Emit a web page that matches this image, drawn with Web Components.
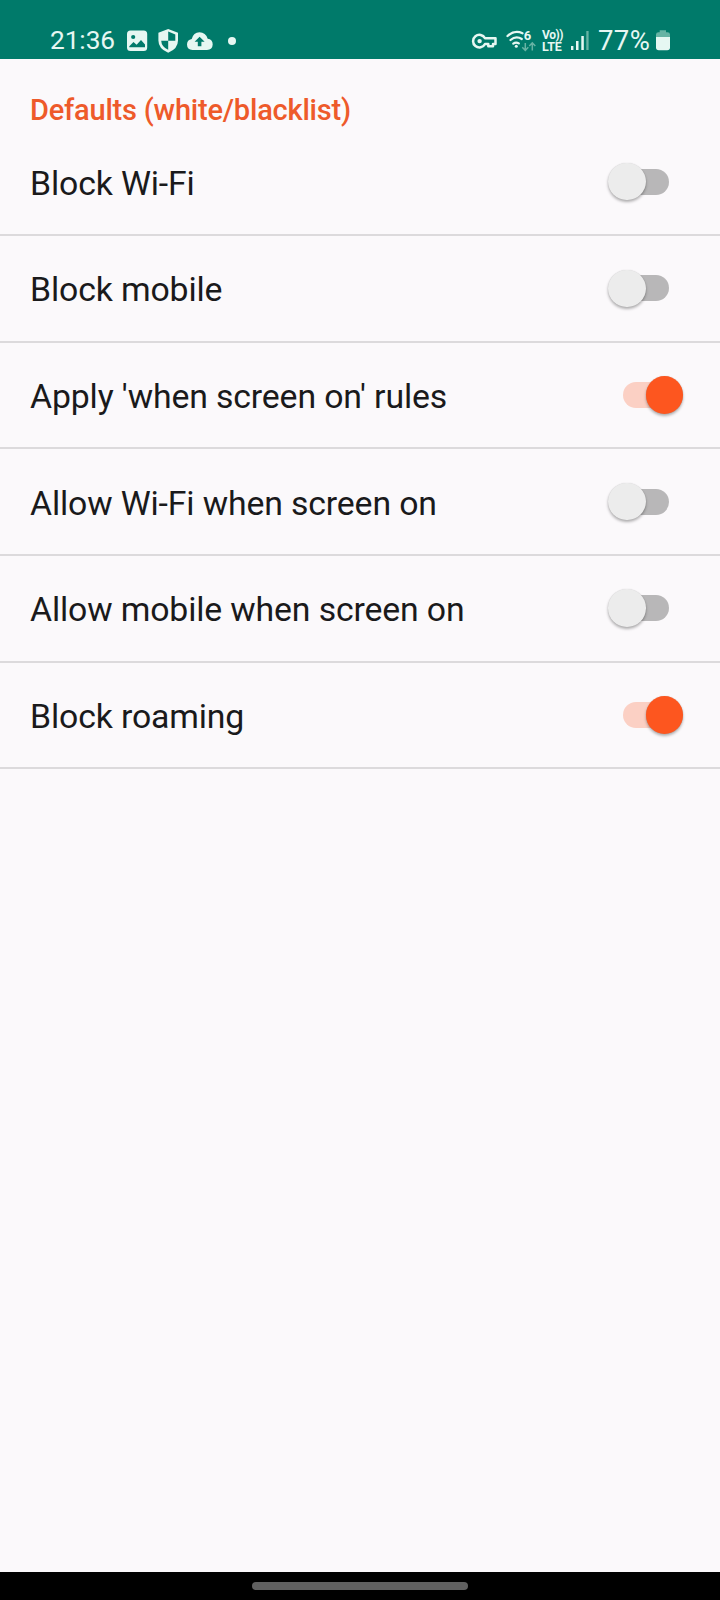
<!DOCTYPE html>
<html lang="en">
<head>
<meta charset="utf-8">
<title>Defaults</title>
<style>
html,body{margin:0;background:#fbf9fb}
body{font-family:Roboto,"Liberation Sans",sans-serif}
</style>
</head>
<body>
<settings-screen></settings-screen>
<script>
const define = (name, html, setup) => customElements.define(name, class extends HTMLElement {
  constructor() {
    super();
    const t = document.createElement('template');
    t.innerHTML = html;
    this.attachShadow({mode: 'open'}).appendChild(t.content.cloneNode(true));
    if (setup) setup(this);
  }
});

define('status-icon', `
<style>:host{display:block;flex:none;height:30px}::slotted(svg){display:block}</style><slot></slot>`);

define('volte-badge', `
<style>
:host{display:flex;flex-direction:column;width:22px;height:24px;flex:none;font-weight:700;color:#e6f7f2}
span{display:block;white-space:nowrap;line-height:11px;height:11px}
.v{font-size:12px;letter-spacing:-.4px}
.l{font-size:12.500px;letter-spacing:-.2px}
</style><span class="v">Vo))</span><span class="l">LTE</span>`);

define('status-bar', `
<style>
:host{display:flex;box-sizing:border-box;height:58.5px;background:#007a6a;color:#e6f7f2;padding:26px 49px 0 50px;justify-content:space-between}
.g{display:flex;height:30px}
.time,.pct{line-height:29px;white-space:nowrap}
.time{width:75px;font-size:26.300px;letter-spacing:-.1px}
.pct{width:57px;font-size:27.500px;letter-spacing:.4px}
volte-badge{margin:4px 6px 0 1px}
</style>
<div class="g">
 <span class="time">21:36</span>
 <status-icon><svg width="115" height="30" viewBox="125 26 115 30">
  <path fill="#e6f7f2" fill-rule="evenodd" d="M130.500 30.500H143.700Q147.200 30.500 147.200 34V47.500Q147.200 51 143.700 51H130.500Q127 51 127 47.500V34Q127 30.500 130.500 30.500ZM135.300 37A2.100 2.100 0 1 0 131.100 37A2.100 2.100 0 1 0 135.300 37ZM129.300 47.300H145V44.600L141 40L136.600 44.700L133.500 42L129.300 46.200Z"/>
  <path fill="#e6f7f2" fill-rule="evenodd" d="M168.200 29L178 32.700V40.500Q178 48.800 168.200 52.700Q158.400 48.800 158.400 40.500V32.700ZM168.200 31.600V40.700H161.200Q161.500 46.800 168.200 49.800V40.700H175.300V34.400Z"/>
  <path fill="#e6f7f2" fill-rule="evenodd" d="M192.500 50Q187 49.500 187 44.500Q187 40 191.700 39.100Q193.400 32.500 199.500 32.300Q205.700 32.300 207.700 38.800Q212.700 39.500 212.700 44.500Q212.500 49.500 207 50ZM199.600 36.700L194.600 41.800H197.800V46.300H201.400V41.800H204.600Z"/>
  <circle cx="232" cy="41" r="4" fill="#e6f7f2"/>
 </svg></status-icon>
</div>
<div class="g">
 <status-icon><svg width="71" height="30" viewBox="470 26 71 30">
  <path fill="none" stroke="#e6f7f2" stroke-width="2.500" stroke-linejoin="round" d="M485 38.300A6.300 6.300 0 1 0 485 44H488.300V46.300H493V44H495.500V38.300Z"/>
  <circle cx="479.600" cy="41.100" r="2.200" fill="#e6f7f2"/>
  <g fill="none" stroke="#e6f7f2" stroke-width="2.300" stroke-linecap="round">
   <path d="M507.500 36Q514.500 29.600 522.500 33.200"/>
   <path d="M510.500 40Q516 35.300 521.800 39"/>
   <path d="M513.300 43.600Q516 41.600 518.800 43.400"/>
  </g>
  <circle cx="516.300" cy="46.300" r="1.500" fill="#e6f7f2"/>
  <text x="523.800" y="39.800" font-family="Roboto,sans-serif" font-size="13" font-weight="700" fill="#e6f7f2">6</text>
  <g fill="none" stroke="#67b3a4" stroke-width="1.500"><path d="M525.300 43V50M522.300 47.300L525.300 50.400L528.300 47.300M532.300 50.500V43M529.300 45.900L532.300 42.800L535.300 45.900"/></g>
 </svg></status-icon>
 <volte-badge></volte-badge>
 <status-icon><svg width="28" height="30" viewBox="570 26 28 30">
  <g fill="#e6f7f2"><rect x="571" y="46" width="2.400" height="4"/><rect x="576" y="41" width="2.500" height="9"/><rect x="581.300" y="36" width="2.500" height="14"/><rect x="586.300" y="31" width="2.300" height="19" fill="#67b3a4"/></g>
 </svg></status-icon>
 <span class="pct">77%</span>
 <status-icon><svg width="16" height="30" viewBox="655 26 16 30">
  <path fill="#67b3a4" d="M656 37V34.500Q656 32.200 658.500 32.200H659.700V30.200H666V32.200H667.500Q670 32.200 670 34.500V37Z"/>
  <path fill="#e6f7f2" d="M656 37H670V47.500Q670 50.300 667.200 50.300H658.800Q656 50.300 656 47.500Z"/>
 </svg></status-icon>
</div>`);

define('toggle-switch', `
<style>
:host{display:grid;grid-template-columns:80px;align-items:center;width:80px;height:40px;flex:none}
.track,.thumb{grid-area:1/1}
.track{width:46px;height:26px;border-radius:13px;background:#b8b7b8;margin-left:17px}
.thumb{width:37.600px;height:37.600px;border-radius:50%;background:#ececec;margin-left:2.300px;box-shadow:0 2px 3px rgba(0,0,0,.3),0 0 1px rgba(0,0,0,.15)}
:host([on]) .track{background:#fbd0c4}
:host([on]) .thumb{background:#fd561f;margin-left:39.700px}
</style><div class="track"></div><div class="thumb"></div>`);

define('setting-row', `
<style>
:host{display:flex;box-sizing:border-box;height:106.650px;padding:31.300px 34px 0 30px;border-bottom:2px solid #dcdadc;justify-content:space-between;align-items:flex-start}
.label{font-size:33.800px;line-height:46px;color:#1a1a1b;white-space:nowrap;letter-spacing:-.14px}
toggle-switch{margin-top:.9px}
</style><span class="label"><slot></slot></span><toggle-switch></toggle-switch>`,
 host => { if (host.hasAttribute('on')) host.shadowRoot.querySelector('toggle-switch').setAttribute('on', ''); });

define('section-title', `
<style>:host{display:block;box-sizing:border-box;height:71px;padding:31px 30px 0;font-size:29px;font-weight:500;line-height:40px;letter-spacing:-.21px;color:#ee5a2a;white-space:nowrap}</style><slot></slot>`);

define('gesture-bar', `
<style>:host{display:flex;height:28px;background:#000;justify-content:center;align-items:center}
div{width:216px;height:7.500px;border-radius:4px;background:#606060}</style><div></div>`);

define('settings-screen', `
<style>
:host{display:flex;flex-direction:column;width:720px;height:1600px;background:#fbf9fb;overflow:hidden}
main{flex:1}
</style>
<status-bar></status-bar>
<main>
 <section-title>Defaults (white/blacklist)</section-title>
 <setting-row>Block Wi-Fi</setting-row>
 <setting-row>Block mobile</setting-row>
 <setting-row on>Apply 'when screen on' rules</setting-row>
 <setting-row>Allow Wi-Fi when screen on</setting-row>
 <setting-row>Allow mobile when screen on</setting-row>
 <setting-row on>Block roaming</setting-row>
</main>
<gesture-bar></gesture-bar>`);
</script>
</body>
</html>
